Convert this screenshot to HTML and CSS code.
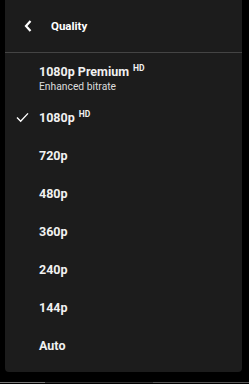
FILE: index.html
```html
<!DOCTYPE html>
<html>
<head>
<meta charset="utf-8">
<link rel="stylesheet" href="styles.css">
</head>
<body>
<div class="panel">
  <div class="header">
    <svg class="back" viewBox="0 0 10 14" width="10" height="14"><path d="M7.5 2 L3 7 L7.5 12" fill="none" stroke="#fff" stroke-width="2.2"/></svg>
    <span class="title">Quality</span>
  </div>
  <div class="list">
    <div class="item premium">
      <span class="check"></span>
      <div class="label">
        <div class="main">1080p Premium<sup>HD</sup></div>
        <div class="sub">Enhanced bitrate</div>
      </div>
    </div>
    <div class="item">
      <span class="check"><svg viewBox="0 0 14 12" width="13" height="11"><path d="M1 6 L5 10 L13 1.5" fill="none" stroke="#fff" stroke-width="1.5"/></svg></span>
      <div class="label"><div class="main">1080p<sup>HD</sup></div></div>
    </div>
    <div class="item"><span class="check"></span><div class="label"><div class="main">720p</div></div></div>
    <div class="item"><span class="check"></span><div class="label"><div class="main">480p</div></div></div>
    <div class="item"><span class="check"></span><div class="label"><div class="main">360p</div></div></div>
    <div class="item"><span class="check"></span><div class="label"><div class="main">240p</div></div></div>
    <div class="item"><span class="check"></span><div class="label"><div class="main">144p</div></div></div>
    <div class="item"><span class="check"></span><div class="label"><div class="main">Auto</div></div></div>
  </div>
</div>
<div class="bottom"></div>
</body>
</html>
```
FILE: styles.css
```css
html, body {
  margin: 0;
  padding: 0;
  background: #000;
  width: 249px;
  height: 384px;
  overflow: hidden;
  font-family: Roboto, "Liberation Sans", sans-serif;
  color: #f1f1f1;
}
.panel {
  margin-left: 5px;
  width: 237px;
  height: 372px;
  background: #1c1c1c;
  border-radius: 0 0 4px 4px;
}
.header {
  height: 53px;
  border-bottom: 1px solid #444;
  display: flex;
  align-items: center;
  box-sizing: border-box;
  padding-left: 18px;
}
.back {
  display: block;
  margin-right: 18px;
}
.title {
  font-weight: 700;
  font-size: 11.5px;
  color: #fff;
}
.list {
  padding-top: 5px;
}
.item {
  display: flex;
  align-items: center;
  height: 38px;
}
.item.premium {
  height: 40px;
}
.check {
  width: 34px;
  display: flex;
  justify-content: flex-end;
}
.check svg {
  display: block;
  margin-right: 10px;
}
.main {
  font-weight: 700;
  font-size: 12.5px;
  color: #f1f1f1;
}
.main sup {
  font-size: 8.5px;
  margin-left: 4px;
  vertical-align: 5px;
}
.sub {
  font-size: 10.3px;
  color: #ddd;
  margin-top: 1px;
}
.bottom {
  margin-top: 10px;
  height: 1px;
  background: linear-gradient(to right, #777 0 45px, #333 45px 153px, #555 153px);
}
```
